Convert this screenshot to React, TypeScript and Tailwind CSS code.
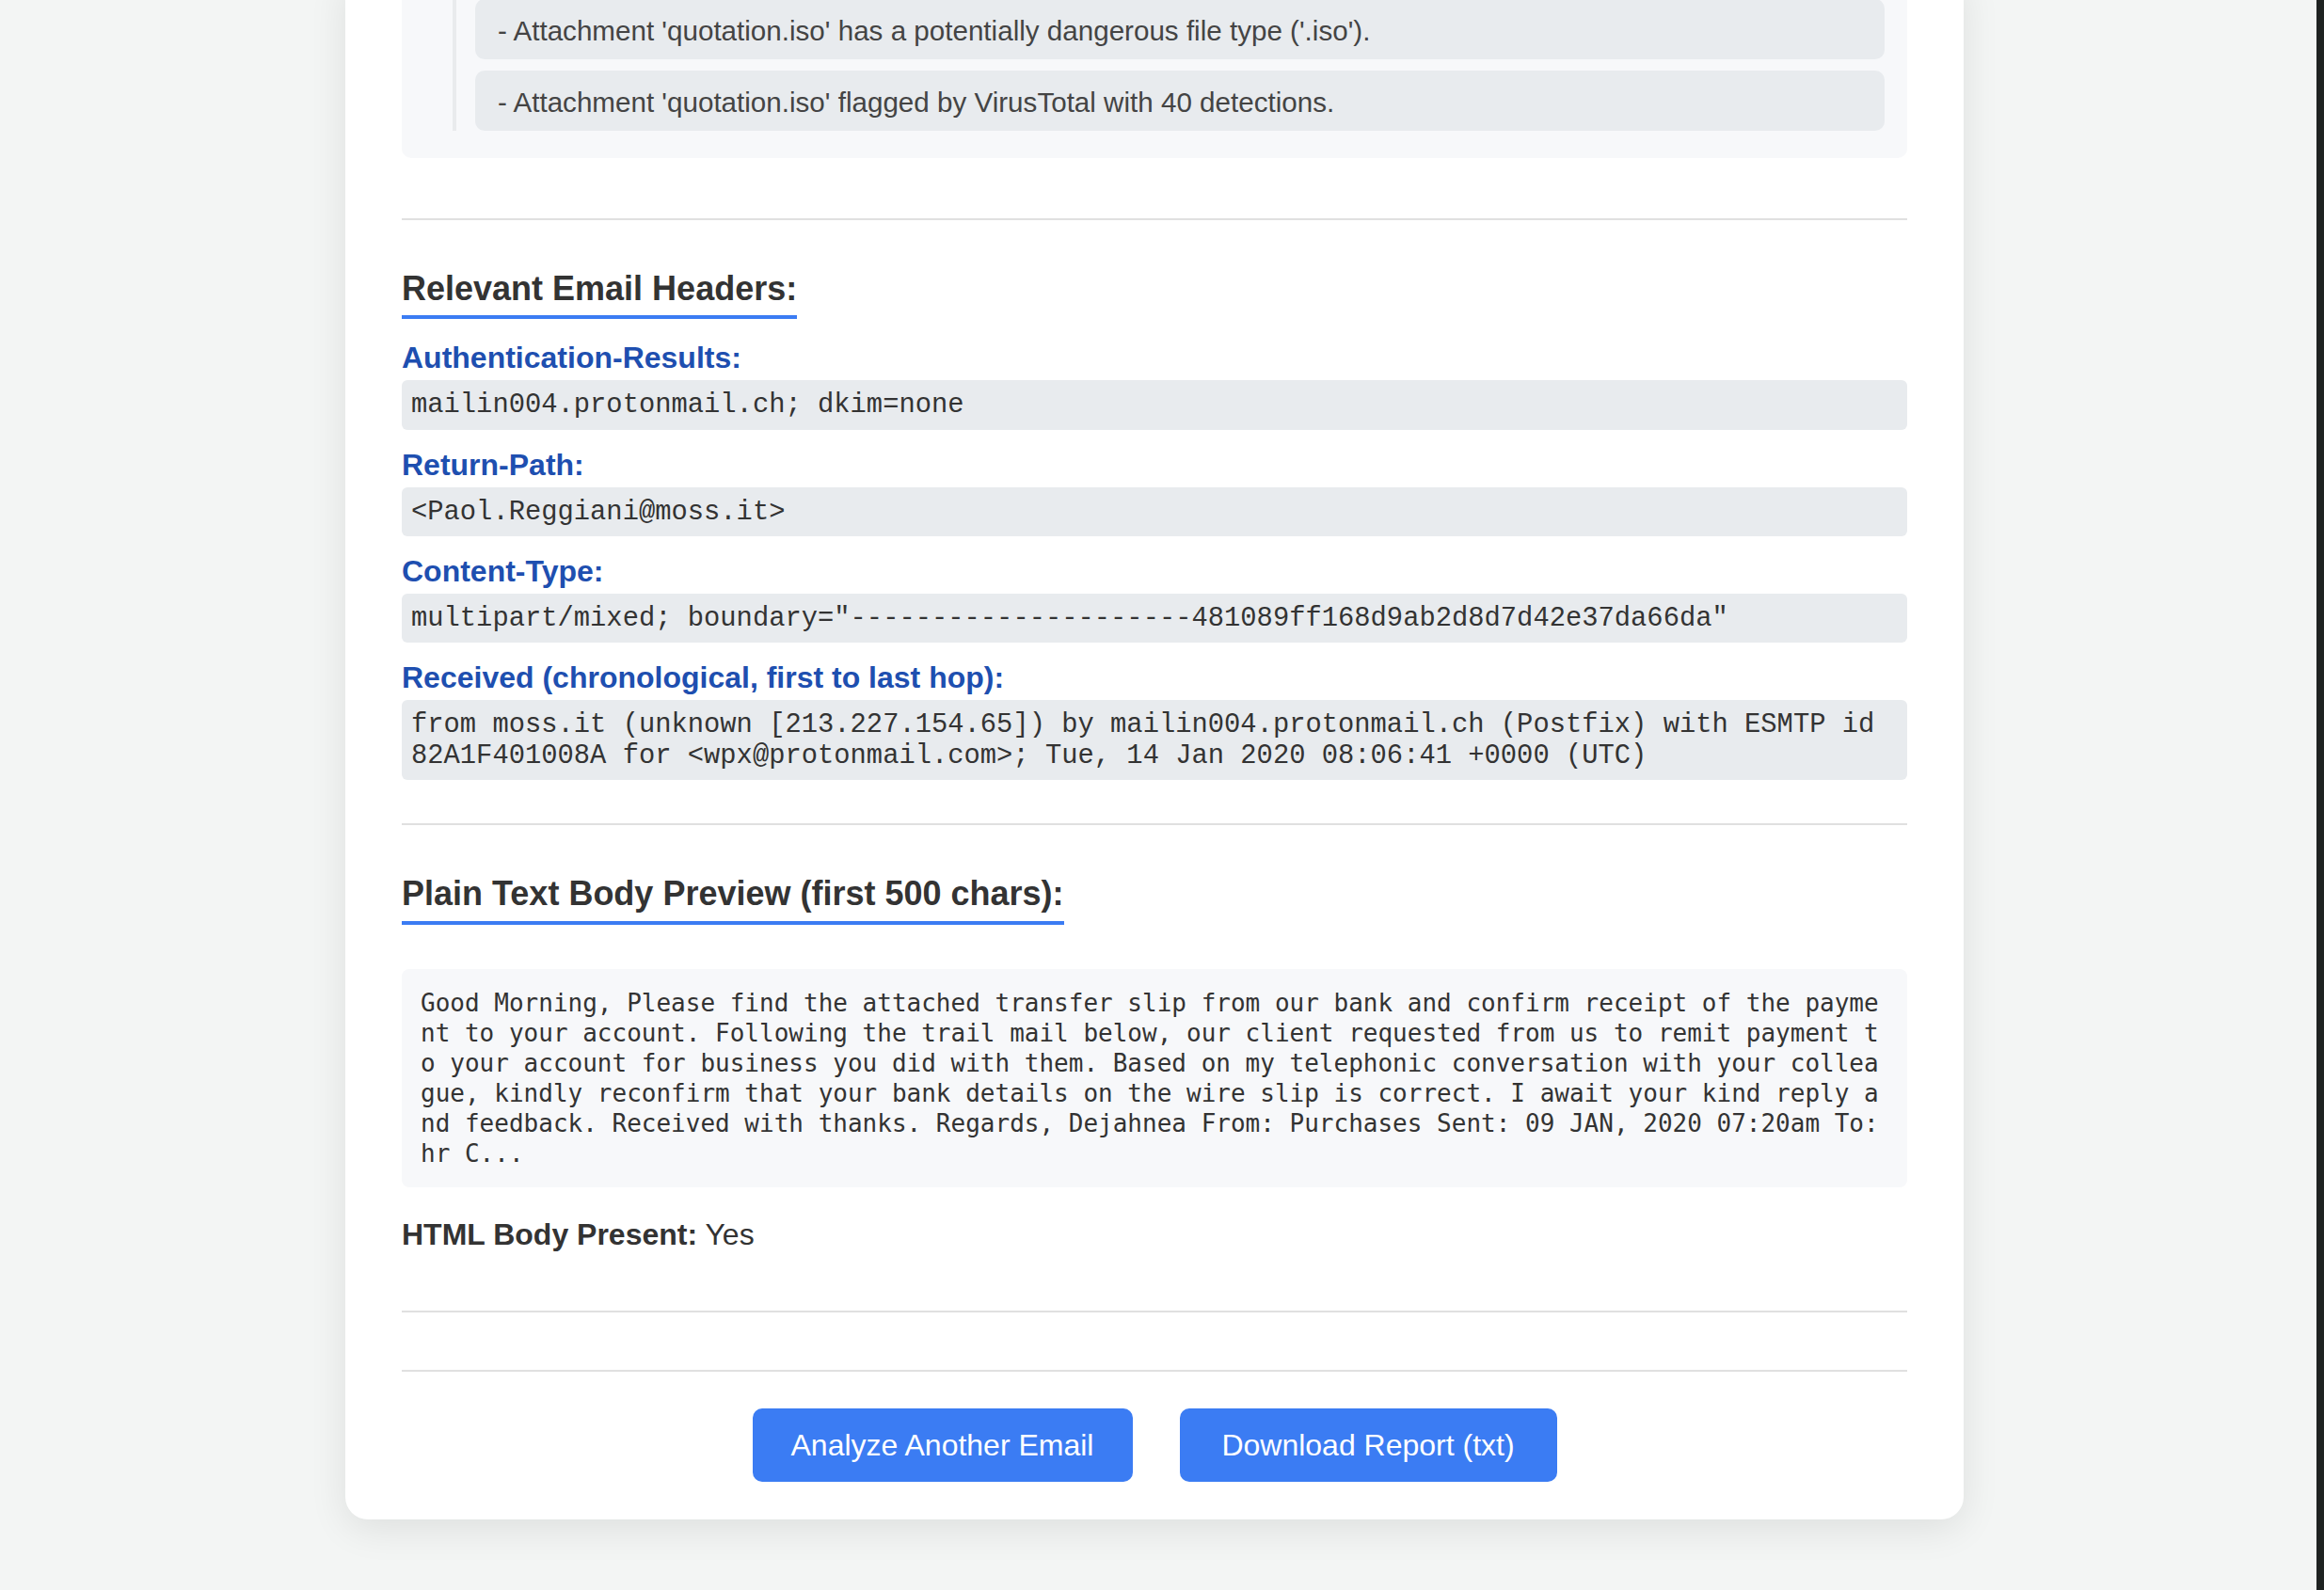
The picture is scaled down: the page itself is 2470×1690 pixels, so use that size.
import React from 'react'

const findings = [
  "- Attachment 'quotation.iso' has a potentially dangerous file type ('.iso').",
  "- Attachment 'quotation.iso' flagged by VirusTotal with 40 detections.",
]

const headers: { name: string; value: string }[] = [
  { name: 'Authentication-Results:', value: 'mailin004.protonmail.ch; dkim=none' },
  { name: 'Return-Path:', value: '<Paol.Reggiani@moss.it>' },
  {
    name: 'Content-Type:',
    value: 'multipart/mixed; boundary="---------------------481089ff168d9ab2d8d7d42e37da66da"',
  },
  {
    name: 'Received (chronological, first to last hop):',
    value:
      'from moss.it (unknown [213.227.154.65]) by mailin004.protonmail.ch (Postfix) with ESMTP id 82A1F401008A for <wpx@protonmail.com>; Tue, 14 Jan 2020 08:06:41 +0000 (UTC)',
  },
]

const bodyPreview =
  'Good Morning, Please find the attached transfer slip from our bank and confirm receipt of the payment to your account. Following the trail mail below, our client requested from us to remit payment to your account for business you did with them. Based on my telephonic conversation with your colleague, kindly reconfirm that your bank details on the wire slip is correct. I await your kind reply and feedback. Received with thanks. Regards, Dejahnea From: Purchases Sent: 09 JAN, 2020 07:20am To: hr C...'

const SectionTitle: React.FC<{ children: React.ReactNode }> = ({ children }) => (
  <div>
    <h3 className="mt-[52px] inline-block border-b-4 border-[#3b7cf3] pb-[8px] text-[36px] font-bold leading-[1.15] text-[#333]">
      {children}
    </h3>
  </div>
)

const Divider: React.FC<{ className?: string }> = ({ className }) => (
  <div className={`h-[2px] bg-[#e0e0e0] ${className ?? ''}`} />
)

export default function App() {
  return (
    <div
      className="flex h-[1690px] w-full overflow-hidden bg-[#f3f5f4]"
      style={{ fontFamily: '"Liberation Sans", Arial, sans-serif' }}
    >
      <div className="flex flex-1 justify-center pr-[8px]">
        <div className="-mt-[25px] w-[1720px] self-start rounded-b-[24px] bg-white px-[60px] pb-[40px] shadow-[0_10px_40px_rgba(0,0,0,0.09)]">
          {/* findings (tail of the previous block, scrolled) */}
          <div className="rounded-b-[10px] bg-[#f7f8fa] px-[24px] pb-[29px] pt-[24px]">
            <ul className="ml-[30px] flex flex-col gap-[12px] border-l-4 border-[#e9ebed] pl-[20px]">
              {findings.map((f) => (
                <li
                  key={f}
                  className="rounded-[10px] bg-[#e8ebee] px-[24px] pb-[13px] pt-[17px] text-[29.6px] leading-[34px] text-[#444]"
                >
                  {f}
                </li>
              ))}
            </ul>
          </div>

          <Divider className="mt-[64px]" />

          {/* Relevant headers */}
          <SectionTitle>Relevant Email Headers:</SectionTitle>
          <div className="mt-[23px] flex flex-col gap-[19px]">
            {headers.map((h) => (
              <div key={h.name}>
                <div className="text-[32px] font-bold leading-[1.15] text-[#1e4fb0]">{h.name}</div>
                <div
                  className="mt-[5px] rounded-[6px] bg-[#e8ebee] px-[10px] pb-[9px] pt-[11px] text-[28.8px] leading-[1.13] text-[#333]"
                  style={{ fontFamily: '"Liberation Mono", "Courier New", monospace' }}
                >
                  {h.value}
                </div>
              </div>
            ))}
          </div>

          <Divider className="mt-[46px]" />

          {/* Body preview */}
          <SectionTitle>Plain Text Body Preview (first 500 chars):</SectionTitle>
          <pre
            className="mt-[47px] whitespace-pre-wrap break-all rounded-[8px] bg-[#f7f8fa] p-[20px] text-[26px] leading-[32px] text-[#333]"
            style={{ fontFamily: '"DejaVu Sans Mono", Menlo, monospace' }}
          >
            {bodyPreview}
          </pre>

          <p className="mt-[32px] text-[32px] leading-[1.15] text-[#333]">
            <span className="font-bold">HTML Body Present:</span> Yes
          </p>

          <Divider className="mt-[63px]" />
          <Divider className="mt-[61px]" />

          {/* actions */}
          <div className="mt-[39px] flex justify-center gap-[50px]">
            <button className="w-[404px] rounded-[10px] bg-[#3b7cf3] py-[20px] text-center text-[32px] leading-[38px] text-white">
              Analyze Another Email
            </button>
            <button className="w-[401px] rounded-[10px] bg-[#3b7cf3] py-[20px] text-center text-[32px] leading-[38px] text-white">
              Download Report (txt)
            </button>
          </div>
        </div>
      </div>
      <div className="w-[8px] shrink-0 bg-[#1e2221]" />
    </div>
  )
}
